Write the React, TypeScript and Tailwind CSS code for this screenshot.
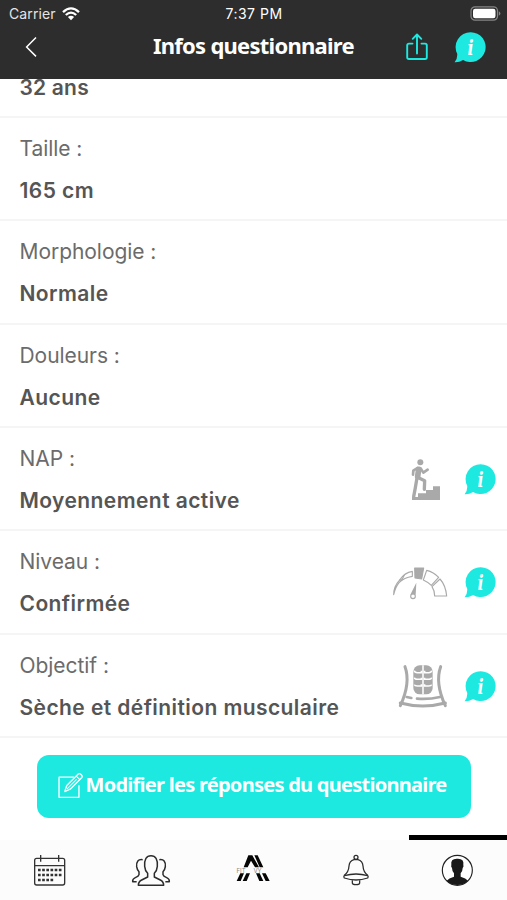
import type { ReactNode } from "react";

type Row = {
  label: string;
  value: string;
  icon?: ReactNode;
};

const InfoBubble = () => (
  <svg className="shrink-0" width="32" height="31" viewBox="0 0 32 31">
    <path
      fill="#1de9e0"
      d="M16.7 0.2a14.9 14.9 0 1 1-7.6 27.7Q5 30.6 0.6 30.3Q3.6 27.2 3.2 21.8A14.9 14.9 0 0 1 16.7 0.2Z"
    />
    <text
      x="20.6"
      y="22.6"
      textAnchor="middle"
      fill="#fff"
      transform="scale(0.8 1)"
      className="font-['DejaVu_Serif',serif] text-[20px] font-bold italic"
    >
      i
    </text>
  </svg>
);

const StairsIcon = () => (
  <svg className="mr-[22px]" width="32" height="45" viewBox="90 50 96 135">
    <g fill="none" stroke="#a9a9a9" strokeLinecap="round" strokeLinejoin="round">
      <circle cx="121" cy="66" r="9" fill="#a9a9a9" stroke="none" />
      <path strokeWidth="17" d="M116 87L113 108" />
      <path strokeWidth="8" d="M112 83L100 91L99 103M122 84L130 97L143 88" />
      <path strokeWidth="10" d="M117 113L134 121L133 147M111 112L106 142L101 169" />
    </g>
    <path fill="#a9a9a9" d="M96 179V170H114V159H138V149H159V138H180V179Z" />
  </svg>
);

const GaugeIcon = () => (
  <svg className="mr-[16px]" width="56" height="34" viewBox="36 63 168 102">
    <g fill="none" stroke="#a9a9a9" strokeWidth="3.4" strokeLinejoin="round">
      <path d="M41 149Q41 124 58 106Q74 82 97 79V94Q72 98 58 112Q47 124 41 149Z" />
      <path d="M58 106L66 104L73 90" />
      <path fill="#a9a9a9" d="M104 69H131L125 102L105 99Z" />
      <path d="M140 76Q161 81 176 97L154 121Q145 112 130 105Z" />
      <path d="M180 102Q197 121 200 153H164Q164 137 156 125Z" />
      <path fill="#a9a9a9" stroke="none" d="M109 113L91 149H107Z" />
      <circle cx="99" cy="154" r="7" fill="#fff" />
    </g>
  </svg>
);

const AbsIcon = () => (
  <svg className="mr-[16px]" width="50" height="45" viewBox="54 57 150 135">
    <g fill="none" stroke="#a9a9a9" strokeWidth="9" strokeLinecap="round" strokeLinejoin="round">
      <path d="M75 65C87 98 84 132 61 182M182 65C170 98 173 132 196 182" />
      <path d="M61 174Q128 192 196 174" />
      <path strokeWidth="8" d="M80 156L94 159M111 161Q146 164 180 156" />
    </g>
    <rect x="100" y="61" width="58" height="87" rx="19" fill="#a9a9a9" />
    <path
      fill="none"
      stroke="#fff"
      strokeWidth="4.5"
      d="M129 61V148M103 77Q104 83 112 83H124V77M155 77Q154 83 146 83H134V77M103 98Q104 103 112 103H124V98M155 98Q154 103 146 103H134V98M103 119Q104 123 112 123H124V118M155 119Q154 123 146 123H134V118"
    />
  </svg>
);

const rows: Row[] = [
  { label: "Taille :", value: "165 cm" },
  { label: "Morphologie :", value: "Normale" },
  { label: "Douleurs :", value: "Aucune" },
  { label: "NAP :", value: "Moyennement active", icon: <StairsIcon /> },
  { label: "Niveau :", value: "Confirmée", icon: <GaugeIcon /> },
  {
    label: "Objectif :",
    value: "Sèche et définition musculaire",
    icon: <AbsIcon />,
  },
];

const Header = () => (
  <header className="h-[79px] shrink-0 bg-[#2d2d2d] text-white">
    <div className="grid h-[27px] grid-cols-3 items-center pl-[9px] pr-[6px] text-[14px]">
      <div className="flex items-center gap-[6px]">
        <span className="tracking-[0.1px] text-[#e4e4e4]">Carrier</span>
        <svg width="18" height="14" viewBox="0 0 18 14">
          <g fill="none" stroke="#fff" strokeWidth="2.3">
            <path d="M1 5.1Q9-2.4 17 5.1M3.8 8Q9 3.2 14.2 8" />
          </g>
          <path fill="#fff" d="M5.9 10.1Q9 7.6 12.1 10.1L9 13.3Z" />
        </svg>
      </div>
      <span className="pr-[2px] text-center tracking-[0.5px]">7:37 PM</span>
      <svg className="justify-self-end" width="31" height="15" viewBox="0 0 31 15">
        <rect x="1" y="0.8" width="26.5" height="13.4" rx="4" fill="none" stroke="#858585" strokeWidth="1.2" />
        <rect x="3" y="2.8" width="22.5" height="9.4" rx="2.2" fill="#fff" />
        <path fill="#858585" d="M28.8 5.2Q30.4 6 30.4 7.5T28.8 9.8Z" />
      </svg>
    </div>
    <div className="flex h-[40px] items-center pl-[25px] pr-[21px]">
      <svg width="13" height="22" viewBox="0 0 13 22">
        <path d="M11 1.4L1.6 11L11 20.4" fill="none" stroke="#fff" strokeWidth="1.5" />
      </svg>
      <h1 className="ml-[115px] whitespace-nowrap pb-[4px] font-['Noto_Sans',sans-serif] text-[22px] font-bold leading-none tracking-[-0.75px]">
        Infos questionnaire
      </h1>
      <svg className="ml-auto mr-[26px]" width="22" height="28" viewBox="0 0 22 28">
        <g fill="none" stroke="#1de9e0" strokeWidth="1.9" strokeLinecap="round" strokeLinejoin="round">
          <path d="M6.5 10.6H3Q1.2 10.6 1.2 12.4V24.2Q1.2 26 3 26H19Q20.8 26 20.8 24.2V12.4Q20.8 10.6 19 10.6H15.5" />
          <path d="M11 20.5V1.6M6.7 5.8L11 1.5L15.3 5.8" />
        </g>
      </svg>
      <InfoBubble />
    </div>
  </header>
);

const TabBar = () => (
  <nav className="h-[65px] shrink-0 bg-white">
    <div className="ml-auto h-[5px] w-[98px] bg-black" />
    <div className="-mx-[2px] grid h-[60px] grid-cols-5 place-items-center bg-[#fcfcfc]">
      <svg width="33" height="33" viewBox="99 342 99 99">
        <g fill="none" stroke="#333" strokeWidth="4">
          <rect x="104" y="355" width="90" height="80" rx="6" />
          <path d="M104 377H194M122 345V365M176 345V365" />
          <path strokeWidth="8" strokeDasharray="8 4.5" d="M114 390H185M114 405H185M114 420H160" />
        </g>
      </svg>
      <svg width="40" height="33" viewBox="396 339 120 99">
        <g fill="none" stroke="#2c2c2c" strokeWidth="4.5" strokeLinejoin="round">
          <path d="M418 433Q418 422 428 417L446 408V397Q438 389 437 376Q435 344 456 344T475 376Q474 389 466 397V408L484 417Q494 422 494 433Z" />
          <path d="M431 356Q411 353 413 377Q414 386 420 392V401Q419 406 409 410Q400 414 401 422H413M481 356Q501 353 499 377Q498 386 492 392V401Q493 406 503 410Q512 414 511 422H499" />
        </g>
      </svg>
      <div className="relative -mt-[3px]">
        <svg width="34" height="27" viewBox="27 29 102 81">
          <path
            fill="#050505"
            d="M64 30H76L96 66H84L72 46L62 66H50ZM82 30H92L109 66H98ZM40 84H51L41 107H29ZM58 84H69L59 107H47ZM87 84H98L109 107H97ZM105 84H116L128 107H116Z"
          />
        </svg>
        <span className="absolute left-0 top-[12.5px] text-[6px] leading-none text-[#888]">FIT</span>
        <span className="absolute left-[17px] top-[12.5px] text-[6px] leading-none text-[#888]">VY</span>
      </div>
      <svg width="28" height="33" viewBox="267 342 84 99">
        <g fill="none" stroke="#2c2c2c" strokeWidth="3.8" strokeLinejoin="round">
          <circle cx="309" cy="352" r="6" />
          <path d="M303 359Q289 363 288 378Q287 396 274 406Q271 410 274 414Q309 426 344 414Q347 410 344 406Q331 396 330 378Q329 363 315 359Z" />
          <path d="M274 407Q309 397 344 407M298 421V429Q298 434 309 434T320 429V421" />
        </g>
      </svg>
      <svg width="33" height="33" viewBox="567 342 99 99">
        <circle cx="616" cy="391" r="45" fill="#fff" stroke="#222" strokeWidth="3.5" />
        <path
          fill="#191919"
          d="M584 422Q590 415 606 410V400Q600 393 600 384Q596 379 598 375Q595 355 616 356Q637 355 634 375Q636 379 632 384Q632 393 626 400V410Q642 415 648 422Q635 435 616 435T584 422Z"
        />
      </svg>
    </div>
  </nav>
);

export default function App() {
  return (
    <div className="flex h-[900px] w-full flex-col overflow-hidden bg-white font-[Inter,sans-serif]">
      <Header />

      <main className="flex flex-1 flex-col text-[21px]">
        <div className="flex h-[39px] shrink-0 flex-col justify-end border-b-2 border-[#f5f5f5] pb-[21px] pl-[19.5px]">
          <p className="font-semibold leading-[15px] tracking-[0.2px] text-[#555]">32 ans</p>
        </div>
        {rows.map((row) => (
          <div
            key={row.label}
            className="flex h-[103.33px] shrink-0 items-center border-b-2 border-[#f5f5f5] pl-[19.5px] pr-[11px]"
          >
            <div className="whitespace-nowrap pt-[3px]">
              <p className="leading-[42px] tracking-[-0.05px] text-[#6b6b6b]">{row.label}</p>
              <p className="font-semibold leading-[42px] tracking-[0.42px] text-[#555]">{row.value}</p>
            </div>
            {row.icon && (
              <div className="ml-auto flex items-center pt-[2px]">
                {row.icon}
                <InfoBubble />
              </div>
            )}
          </div>
        ))}
        <button className="ml-[37px] mt-[17px] flex h-[63px] w-[434px] shrink-0 items-center rounded-xl bg-[#1de9e0] pl-[20px] text-white">
          <svg className="-mt-[1px]" width="27" height="27" viewBox="171 100 80 80">
            <g fill="none" stroke="#fff" strokeWidth="4" strokeLinejoin="round">
              <path d="M221 115H177V175H236V139" />
              <path d="M194 158L200 140L234 106Q238 103 243 108T244 117L210 151Z" />
              <path d="M228 112L238 122M201 150L229 122" strokeWidth="3" />
            </g>
          </svg>
          <span className="ml-[1.5px] whitespace-nowrap pb-[3px] font-['Noto_Sans',sans-serif] text-[20px] font-bold leading-none tracking-[-0.73px]">
            Modifier les réponses du questionnaire
          </span>
        </button>
      </main>

      <TabBar />
    </div>
  );
}
